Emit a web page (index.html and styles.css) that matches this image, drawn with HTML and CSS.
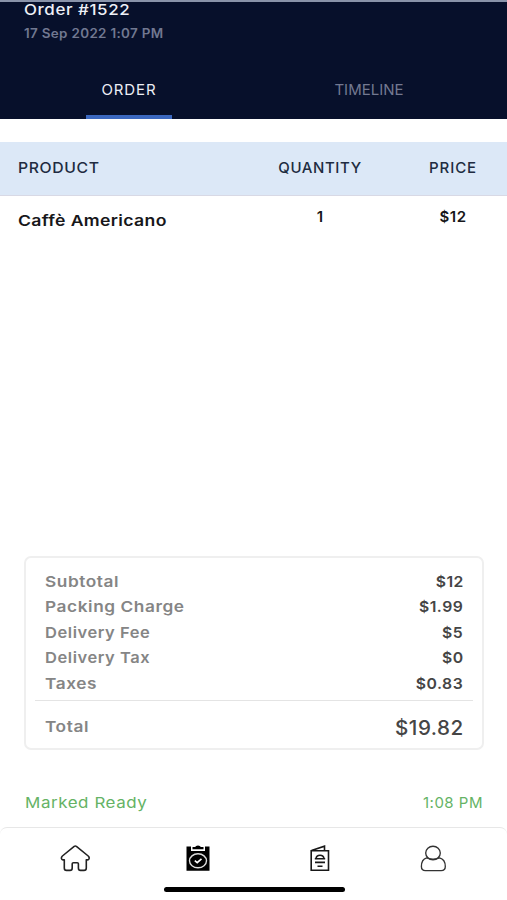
FILE: index.html
```html
<!DOCTYPE html>
<html lang="en">
<head>
<meta charset="utf-8">
<title>Order #1522</title>
<link rel="stylesheet" href="styles.css">
</head>
<body>
<div class="screen">
  <header class="header">
    <h1 class="title">Order #1522</h1>
    <p class="date">17 Sep 2022 1:07 PM</p>
    <nav class="tabs">
      <div class="tab active"><span>ORDER</span></div>
      <div class="tab"><span>TIMELINE</span></div>
    </nav>
  </header>
  <section class="products">
    <div class="row head">
      <span class="product">PRODUCT</span><span class="qty">QUANTITY</span><span class="price">PRICE</span>
    </div>
    <div class="row item">
      <span class="product">Caffè Americano</span><span class="qty">1</span><span class="price">$12</span>
    </div>
  </section>
  <section class="summary">
    <div class="line"><span>Subtotal</span><b>$12</b></div>
    <div class="line"><span>Packing Charge</span><b>$1.99</b></div>
    <div class="line delivery"><span>Delivery Fee</span><b>$5</b></div>
    <div class="line delivery"><span>Delivery Tax</span><b>$0</b></div>
    <div class="line"><span>Taxes</span><b>$0.83</b></div>
    <div class="line total"><span>Total</span><b>$19.82</b></div>
  </section>
  <div class="status"><span class="ready">Marked Ready</span><span class="time">1:08 PM</span></div>
  <footer class="bottom">
    <nav class="icons">
      <svg width="30" height="28" viewBox="0 0 30 28" fill="none" stroke="#222" stroke-width="1.6" stroke-linejoin="round"><path d="M14.2 1.4Q15.3.7 16.4 1.4L28.2 11Q29.8 12.5 28.8 14.2Q28 15.2 26.3 14.8V23Q26.3 25.4 24 25.4H20.5Q18.4 25.4 18.4 23V18.8Q18.4 17.7 17.2 17.7H13.4Q12.2 17.7 12.2 18.8V23Q12.2 25.4 10 25.4H6.5Q4.3 25.4 4.3 23V14.8Q2.6 15.2 1.8 14.2Q.8 12.5 2.4 11Z"/></svg>
      <svg class="orders" width="24" height="28" viewBox="0 0 24 28"><path fill="#000" d="M.5 1.5H5V6H19V1.5H23.5V25.8H.5Z"/><path fill="#000" d="M6.5 4.3V2H9.2Q9.6.4 12 .4T14.8 2H17.5V4.3Z"/><ellipse cx="12" cy="15.8" rx="8.5" ry="7" fill="none" stroke="#ddd" stroke-width="1.4"/><path d="M8.8 15.6L11.2 17.6 15.5 13.9" fill="none" stroke="#fff" stroke-width="1.6"/></svg>
      <svg class="menu" width="20" height="28" viewBox="0 0 20 28" fill="none" stroke="#181818" stroke-width="1.6"><path d="M1.2 5.8H18.5V25.3H1.2ZM1.5 5.5L14.5 1.2V5.8"/><path d="M4.8 13.8H15.2M6 13.5Q6.4 10.3 10 10.3T14 13.5M5 17.4H15M7.5 21.2H12.5"/></svg>
      <svg width="28" height="28" viewBox="0 0 28 28" fill="none" stroke="#333" stroke-width="1.35"><ellipse cx="14" cy="8" rx="7.3" ry="6.8"/><path d="M7.7 12.8Q2.4 14.2 2.4 21.5Q2.4 25.6 6.4 25.6H22.2Q26.3 25.6 26.3 21.5Q26.3 14.2 20.5 12.8Q14 15.6 7.7 12.8Z"/></svg>
    </nav>
    <div class="indicator"></div>
  </footer>
</div>
</body>
</html>
```
FILE: styles.css
```css
* { box-sizing: border-box; }
body { margin: 0; background: #fff; font-family: Inter, "Open Sans", sans-serif; }
.screen { width: 507px; height: 900px; display: flex; flex-direction: column; overflow: hidden; }
.header { height: 119px; background: #07102b; border-top: 2px solid #8993a9; display: flex; flex-direction: column; flex: none; }
.title { margin: 0 0 0 24px; font-size: 15px; line-height: 16px; font-weight: 500; color: #eef0f7; letter-spacing: .5px; transform: scaleX(1.13); transform-origin: left; }
.date { margin: 8px 0 0 24px; font-size: 12.5px; line-height: 16px; font-weight: 600; color: #717891; letter-spacing: .3px; transform: scaleX(1.075); transform-origin: left; }
.tabs { margin-top: auto; display: flex; padding: 0 18px 0 9px; height: 58px; }
.tab { flex: 1; display: flex; justify-content: center; }
.tab span { height: 58px; line-height: 58px; font-size: 15px; color: #737991; }
.tab.active span { color: #eceef5; width: 86px; text-align: center; letter-spacing: .9px; border-bottom: 4px solid #3b68c0; }
.products { padding-top: 23px; flex: none; }
.row { display: grid; grid-template-columns: 254px 132px 1fr; font-size: 15px; }
.product { padding-left: 18px; transform-origin: 18px 50%; }
.qty { text-align: center; }
.price { text-align: center; padding-left: 13px; }
.head { height: 54px; line-height: 51px; background: #dce8f7; border-bottom: 1px solid #d8d9e5; font-weight: 500; color: #202b40; letter-spacing: .6px; }
.head .product { transform: scaleX(1.05); }
.head .price { letter-spacing: .9px; }
.item { height: 50px; font-weight: 600; line-height: 41px; color: #17171a; letter-spacing: .3px; }
.item .product { line-height: 49px; transform: scaleX(1.175); }
.item .price { letter-spacing: .6px; }
.summary { width: 460px; height: 194px; margin: auto 23px 0 24px; border: 2px solid #efefef; border-radius: 7px; padding: 11px 9px 0; flex: none; }
.line { display: flex; justify-content: space-between; height: 25.4px; line-height: 26px; padding: 0 10px; font-size: 15px; font-weight: 600; color: #858585; letter-spacing: .5px; }
.line span { transform: scaleX(1.15); transform-origin: left; }
.line.delivery span { transform: scaleX(1.1); }
.line b { font-weight: 600; color: #454545; transform: scaleX(1.05); transform-origin: right; margin-right: -.5px; }
.total { height: 49px; margin-top: 4px; border-top: 1px solid #e4e4e4; line-height: 52px; }
.total b { font-size: 20px; font-weight: 500; line-height: 54px; transform: scaleX(1.03); }
.status { display: flex; justify-content: space-between; padding: 0 24px 0 25px; margin-top: 40px; height: 37px; line-height: 26px; color: #65b365; font-size: 15px; letter-spacing: .5px; flex: none; }
.ready { transform: scaleX(1.13); transform-origin: left; }
.bottom { height: 73px; border-top: 1px solid #e7e7e7; border-radius: 7px 7px 0 0; flex: none; }
.icons { display: flex; height: 59px; padding: 17px 0 0 60px; }
.orders { margin-left: 96px; }
.menu { margin: 0 89px 0 99.5px; }
.indicator { width: 181px; height: 5px; border-radius: 3px; background: #000; margin-left: 164px; }
```
